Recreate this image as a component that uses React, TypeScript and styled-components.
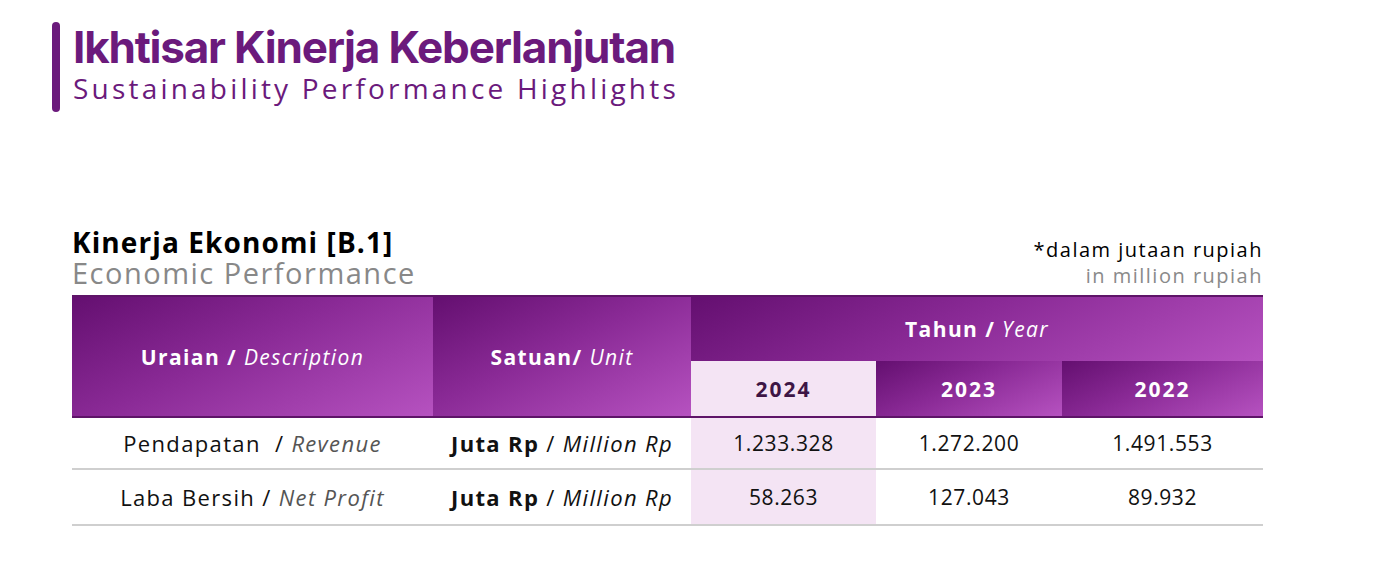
import styled, { createGlobalStyle } from "styled-components";

const GlobalStyle = createGlobalStyle`
  body {
    margin: 0;
    background: #ffffff;
    font-family: "Open Sans", "Liberation Sans", sans-serif;
  }
`;

const Page = styled.div`
  width: 1390px;
  height: 576px;
  background: #ffffff;
  overflow: hidden;
`;

const PageHeader = styled.div`
  display: flex;
  align-items: stretch;
  gap: 13px;
  padding: 22px 0 0 52px;
  height: 90px;
`;

const Bar = styled.div`
  width: 8px;
  border-radius: 4px;
  background: #6b1a7c;
`;

const HeaderText = styled.div`
  display: flex;
  flex-direction: column;
  color: #6b1a7c;
`;

const Title = styled.h1`
  margin: 0;
  font-family: "Inter", sans-serif;
  font-weight: 700;
  font-size: 44px;
  line-height: 50px;
  letter-spacing: -1.2px;
`;

const Subtitle = styled.div`
  font-family: "Open Sans", sans-serif;
  font-size: 28px;
  line-height: 34px;
  letter-spacing: 3.2px;
  margin-top: -1px;
`;

const Section = styled.section`
  margin: 115px 0 0 72px;
  width: 1191px;
`;

const SectionHead = styled.div`
  display: flex;
  justify-content: space-between;
  align-items: flex-end;
  padding-bottom: 6px;
`;

const SectionTitle = styled.div`
  display: flex;
  flex-direction: column;
`;

const TitleMain = styled.div`
  font-weight: 700;
  font-size: 28px;
  line-height: 30px;
  color: #000;
  letter-spacing: 1.1px;
`;

const TitleSub = styled.div`
  font-size: 29px;
  line-height: 32px;
  color: #888888;
  letter-spacing: 1.5px;
`;

const Note = styled.div`
  text-align: right;
  font-size: 20px;
  line-height: 26px;
  letter-spacing: 1.5px;
`;

const NoteMain = styled.div`
  color: #000;
`;

const NoteSub = styled.div`
  color: #8a8a8a;
`;

const Table = styled.table`
  width: 1191px;
  border-collapse: collapse;
  table-layout: fixed;
  border-top: 2px solid #5e1468;
`;

const gradient = "linear-gradient(155deg, #640f70 0%, #8a2a96 45%, #b652c0 100%)";

const HeadCell = styled.th<{ $h?: number; $light?: boolean; $year?: boolean; $open?: boolean }>`
  height: ${(p) => p.$h ?? 55}px;
  padding: 0;
  background: ${(p) => (p.$light ? "#f4e4f4" : gradient)};
  color: ${(p) => (p.$light ? "#3d1545" : "#ffffff")};
  font-weight: 700;
  font-size: 21px;
  letter-spacing: ${(p) => (p.$year ? 2 : 1.4)}px;
  text-align: center;
  vertical-align: middle;
  border-bottom: ${(p) => (p.$open ? "none" : "2px solid #5e1468")};
`;

const Italic = styled.span`
  font-style: italic;
  font-weight: 400;
`;

const Row = styled.tr`
  border-bottom: 2px solid #cfcfcf;
`;

const Cell = styled.td<{ $hl?: boolean; $h: number; $num?: boolean }>`
  height: ${(p) => p.$h}px;
  padding: 0;
  text-align: center;
  vertical-align: middle;
  white-space: pre;
  font-size: ${(p) => (p.$num ? 21 : 22)}px;
  letter-spacing: ${(p) => (p.$num ? 0.6 : 1.35)}px;
  color: #111;
  background: ${(p) => (p.$hl ? "#f4e4f4" : "transparent")};
`;

const GreyItalic = styled.span`
  font-style: italic;
  color: #555;
`;

const Bold = styled.b`
  font-weight: 700;
`;

const rows = [
  { id: "Pendapatan", en: "Revenue", sep: "  / ", v: ["1.233.328", "1.272.200", "1.491.553"], h: 50 },
  { id: "Laba Bersih", en: "Net Profit", sep: " / ", v: ["58.263", "127.043", "89.932"], h: 54 },
];

export default function App() {
  return (
    <Page>
      <GlobalStyle />
      <PageHeader>
        <Bar />
        <HeaderText>
          <Title>Ikhtisar Kinerja Keberlanjutan</Title>
          <Subtitle>Sustainability Performance Highlights</Subtitle>
        </HeaderText>
      </PageHeader>
      <Section>
        <SectionHead>
          <SectionTitle>
            <TitleMain>Kinerja Ekonomi [B.1]</TitleMain>
            <TitleSub>Economic Performance</TitleSub>
          </SectionTitle>
          <Note>
            <NoteMain>*dalam jutaan rupiah</NoteMain>
            <NoteSub>in million rupiah</NoteSub>
          </Note>
        </SectionHead>
        <Table>
          <colgroup>
            <col style={{ width: 361 }} />
            <col style={{ width: 258 }} />
            <col style={{ width: 185 }} />
            <col style={{ width: 186 }} />
            <col style={{ width: 201 }} />
          </colgroup>
          <thead>
            <tr>
              <HeadCell rowSpan={2}>
                Uraian / <Italic>Description</Italic>
              </HeadCell>
              <HeadCell rowSpan={2}>
                Satuan/ <Italic>Unit</Italic>
              </HeadCell>
              <HeadCell colSpan={3} $h={64} $open>
                Tahun / <Italic>Year</Italic>
              </HeadCell>
            </tr>
            <tr>
              <HeadCell $light $year>2024</HeadCell>
              <HeadCell $year>2023</HeadCell>
              <HeadCell $year>2022</HeadCell>
            </tr>
          </thead>
          <tbody>
            {rows.map((r) => (
              <Row key={r.id}>
                <Cell $h={r.h}>
                  {r.id}
                  {r.sep}
                  <GreyItalic>{r.en}</GreyItalic>
                </Cell>
                <Cell $h={r.h}>
                  <Bold>Juta Rp</Bold> / <i>Million Rp</i>
                </Cell>
                <Cell $h={r.h} $hl $num>
                  {r.v[0]}
                </Cell>
                <Cell $h={r.h} $num>{r.v[1]}</Cell>
                <Cell $h={r.h} $num>{r.v[2]}</Cell>
              </Row>
            ))}
          </tbody>
        </Table>
      </Section>
    </Page>
  );
}
